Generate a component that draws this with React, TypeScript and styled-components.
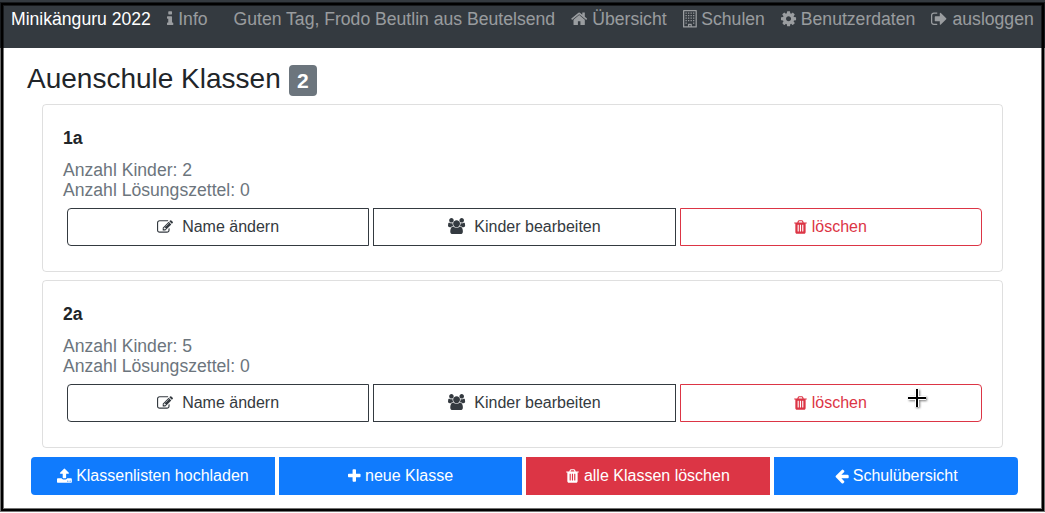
import React from "react";
import styled, { createGlobalStyle, css } from "styled-components";

const GlobalStyle = createGlobalStyle`
  *, *::before, *::after { box-sizing: border-box; }
  body {
    margin: 0;
    background: #fff;
    color: #212529;
    font-family: "Liberation Sans", Arial, sans-serif;
    font-size: 16px;
    line-height: 1.5;
    overflow: hidden;
  }
`;

/* Icon outlines on a 1792-unit em square; x and w give each glyph's advance box. */
const icons = {
  info: { x: 576, w: 640, d: "M1216 1344v128q0 26-19 45t-45 19h-512q-26 0-45-19t-19-45v-128q0-26 19-45t45-19h64v-384h-64q-26 0-45-19t-19-45v-128q0-26 19-45t45-19h384q26 0 45 19t19 45v576h64q26 0 45 19t19 45zm-128-1152v192q0 26-19 45t-45 19h-256q-26 0-45-19t-19-45v-192q0-26 19-45t45-19h256q26 0 45 19t19 45z" },
  home: { x: 64, w: 1664, d: "M1472 992v480q0 26-19 45t-45 19h-384v-384h-256v384h-384q-26 0-45-19t-19-45v-480q0-1 .5-3t.5-3l575-474 575 474q1 2 1 6zm223-69l-62 74q-8 9-21 11h-3q-13 0-21-7l-692-577-692 577q-12 8-24 7-13-2-21-11l-62-74q-8-10-7-23.5t11-21.5l719-599q32-26 76-26t76 26l244 204v-195q0-14 9-23t23-9h192q14 0 23 9t9 23v408l219 182q10 8 11 21.5t-7 23.5z" },
  building: { x: 192, w: 1408, d: "M1536 0q26 0 45 19t19 45v1664q0 26-19 45t-45 19h-1280q-26 0-45-19t-19-45v-1664q0-26 19-45t45-19zM320 128v1536h384v-224q0-13 9.500-22.500t22.500-9.500h320q13 0 22.500 9.500t9.500 22.500v224h384v-1536zM832 1536v128h128v-128z" + [256, 512, 768, 1024, 1280].map((y, row) => (row === 4 ? [448, 1216] : [448, 704, 960, 1216]).map((x) => `M${x} ${y}h128v128h-128z`).join("")).join("") },
  cog: { x: 128, w: 1536, d: "M1152 896q0-106-75-181t-181-75-181 75-75 181 75 181 181 75 181-75 75-181zm512-109v222q0 12-8 23t-20 13l-185 28q-19 54-39 91 35 50 107 138 10 12 10 25t-9 23q-27 37-99 108t-94 71q-12 0-26-9l-138-108q-44 23-91 38-16 136-29 186-7 28-36 28h-222q-14 0-24.5-8.5t-11.5-21.5l-28-184q-49-16-90-37l-141 107q-10 9-25 9-14 0-25-11-126-114-165-168-7-10-7-23 0-12 8-23 15-21 51-66.5t54-70.5q-27-50-41-99l-183-27q-13-2-21-12.5t-8-23.5v-222q0-12 8-23t19-13l186-28q14-46 39-92-40-57-107-138-10-12-10-24 0-10 9-23 26-36 98.5-107.5t94.5-71.5q13 0 26 10l138 107q44-23 91-38 16-136 29-186 7-28 36-28h222q14 0 24.5 8.500t11.5 21.500l28 184q49 16 90 37l142-107q9-9 24-9 13 0 25 10 129 119 165 170 7 8 7 22 0 12-8 23-15 21-51 66.500t-54 70.500q26 50 41 98l183 28q13 2 21 12.500t8 23.500z" },
  signOut: { x: 64, w: 1664, d: "M704 1440q0 4 1 20t.5 26.5-3 23.5-10 19.5-20.5 6.5h-320q-119 0-203.5-84.5t-84.5-203.5v-704q0-119 84.5-203.5t203.5-84.5h320q13 0 22.5 9.5t9.5 22.5q0 4 1 20t.5 26.5-3 23.5-10 19.5-20.5 6.5h-320q-66 0-113 47t-47 113v704q0 66 47 113t113 47h312l11.5 1 11.5 3 8 5.5 7 9 2 13.5zm928-544q0 26-19 45l-544 544q-19 19-45 19t-45-19-19-45v-288h-448q-26 0-45-19t-19-45v-384q0-26 19-45t45-19h448v-288q0-26 19-45t45-19 45 19l544 544q19 19 19 45z" },
  edit: { x: 0, w: 1792, d: "M888 1184l116-116-152-152-116 116v56h96v96h56zm440-720q-16-16-33 1l-350 350q-17 17-1 33t33-1l350-350q17-17 1-33zm80 594v190q0 119-84.5 203.5t-203.5 84.5h-832q-119 0-203.5-84.5t-84.5-203.5v-832q0-119 84.5-203.5t203.5-84.5h832q63 0 117 25 15 7 18 23 3 17-9 29l-49 49q-14 14-32 8-23-6-45-6h-832q-66 0-113 47t-47 113v832q0 66 47 113t113 47h832q66 0 113-47t47-113v-126q0-13 9-22l64-64q15-15 35-7t20 29zm-96-738l288 288-672 672h-288v-288zm444 132l-92 92-288-288 92-92q28-28 68-28t68 28l152 152q28 28 28 68t-28 68z" },
  users: { x: 0, w: 1920, d: "M593 896q-162 5-265 128h-134q-82 0-138-40.5t-56-118.5q0-353 124-353 6 0 43.5 21t97.5 42.5 119 21.5q67 0 133-23-5 37-5 66 0 139 81 256zm1071 637q0 120-73 189.5t-194 69.5h-874q-121 0-194-69.5t-73-189.5q0-53 3.5-103.5t14-109 26.5-108.5 43-97.5 62-81 85.5-53.5 111.5-20q10 0 43 21.5t73 48 107 48 135 21.5 135-21.5 107-48 73-48 43-21.5q61 0 111.5 20t85.5 53.5 62 81 43 97.5 26.5 108.5 14 109 3.5 103.5zm-1024-1277q0 106-75 181t-181 75-181-75-75-181 75-181 181-75 181 75 75 181zm704 384q0 159-112.5 271.5t-271.5 112.5-271.5-112.5-112.5-271.5 112.5-271.5 271.5-112.5 271.5 112.5 112.5 271.5zm576 225q0 78-56 118.5t-138 40.5h-134q-103-123-265-128 81-117 81-256 0-29-5-66 66 23 133 23 59 0 119-21.5t97.5-42.5 43.5-21q124 0 124 353zm-128-609q0 106-75 181t-181 75-181-75-75-181 75-181 181-75 181 75 75 181z" },
  trash: { x: 192, w: 1408, d: "M704 1376v-704q0-14-9-23t-23-9h-64q-14 0-23 9t-9 23v704q0 14 9 23t23 9h64q14 0 23-9t9-23zm256 0v-704q0-14-9-23t-23-9h-64q-14 0-23 9t-9 23v704q0 14 9 23t23 9h64q14 0 23-9t9-23zm256 0v-704q0-14-9-23t-23-9h-64q-14 0-23 9t-9 23v704q0 14 9 23t23 9h64q14 0 23-9t9-23zm-544-992h448l-48-117q-7-9-17-11h-317q-10 2-17 11zm928 32v64q0 14-9 23t-23 9h-96v948q0 83-47 143.5t-113 60.5h-832q-66 0-113-58.5t-47-141.5v-952h-96q-14 0-23-9t-9-23v-64q0-14 9-23t23-9h309l70-167q15-37 54-63t79-26h320q40 0 79 26t54 63l70 167h309q14 0 23 9t9 23z" },
  upload: { x: 64, w: 1664, d: "M1344 1472q0-26-19-45t-45-19-45 19-19 45 19 45 45 19 45-19 19-45zm256 0q0-26-19-45t-45-19-45 19-19 45 19 45 45 19 45-19 19-45zm128-224v320q0 40-28 68t-68 28h-1472q-40 0-68-28t-28-68v-320q0-40 28-68t68-28h427q21 56 70.5 92t110.5 36h256q61 0 110.5-36t70.5-92h427q40 0 68 28t28 68zm-325-648q-17 40-59 40h-256v448q0 26-19 45t-45 19h-256q-26 0-45-19t-19-45v-448h-256q-42 0-59-40-17-39 14-69l448-448q18-19 45-19t45 19l448 448q31 30 14 69z" },
  plus: { x: 192, w: 1408, d: "M1600 736v192q0 40-28 68t-68 28h-416v416q0 40-28 68t-68 28h-192q-40 0-68-28t-28-68v-416h-416q-40 0-68-28t-28-68v-192q0-40 28-68t68-28h416v-416q0-40 28-68t68-28h192q40 0 68 28t28 68v416h416q40 0 68 28t28 68z" },
  arrowLeft: { x: 128, w: 1536, d: "M1664 896v128q0 53-32.5 90.5t-84.5 37.5h-704l293 294q38 36 38 90t-38 90l-75 76q-37 37-90 37-52 0-91-37l-651-652q-37-37-37-90 0-52 37-91l651-650q38-38 91-38 52 0 90 38l75 74q38 38 38 91t-38 91l-293 293h704q52 0 84.5 37.5t32.5 90.5z" },
};

const Glyph = styled.svg<{ $w: number; $tight: boolean }>`
  display: inline-block;
  height: 1em;
  width: ${(p) => p.$w / 1792}em;
  vertical-align: ${(p) => (p.$tight ? "-0.13em" : "-0.17em")};
  fill: currentColor;
  overflow: visible;
`;

function Icon({ name }: { name: keyof typeof icons }) {
  const { x, w, d } = icons[name];
  return (
    <Glyph $w={w} $tight={name === "users"} viewBox={`${x} 0 ${w} 1792`} aria-hidden="true">
      <path
        d={d}
        fillRule={name === "building" ? "evenodd" : "nonzero"}
        transform={name === "trash" ? "translate(-90 0)" : undefined}
      />
    </Glyph>
  );
}

const Page = styled.div`
  position: relative;
  height: 513px;
`;

const Frame = styled.div`
  position: absolute;
  inset: 3px 1px 2px 1px;
  border: 2px solid #000;
  box-shadow: 0 0 0 1px rgba(0, 0, 0, 0.55), inset 0 0 0 1px rgba(0, 0, 0, 0.55);
  pointer-events: none;
`;

const Navbar = styled.nav`
  display: flex;
  align-items: flex-start;
  height: 48px;
  padding: 6px 11px 0;
  background: #343a40;
  color: rgba(255, 255, 255, 0.5);
  font-size: 17.6px;
  line-height: 27px;
  white-space: nowrap;
`;

const Brand = styled.span`
  color: #fff;
  margin-right: 16.2px;
`;

const NavItem = styled.a<{ $gap?: number }>`
  color: inherit;
  margin-right: ${(p) => p.$gap ?? 16}px;
`;

const Main = styled.main`
  padding: 14px 27px 0;
`;

const Title = styled.h1`
  display: flex;
  align-items: center;
  gap: 8px;
  height: 34px;
  margin: 0 0 8px;
  font-size: 28px;
  font-weight: 400;
  line-height: 34px;
`;

const Badge = styled.span`
  margin-top: 2px;
  padding: 5px 8.3px;
  border-radius: 4px;
  background: #6c757d;
  color: #fff;
  font-size: 21px;
  font-weight: 700;
  line-height: 21px;
`;

const CardList = styled.div`
  display: grid;
  gap: 8px;
  padding: 0 15px;
`;

const Card = styled.section`
  height: 168px;
  padding: 20px;
  border: 1px solid rgba(0, 0, 0, 0.125);
  border-radius: 4px;
`;

const CardTitle = styled.h2`
  margin: 3px 0 12px;
  font-size: 17.6px;
  line-height: 20px;
`;

const CardText = styled.p`
  margin: 0 0 8px;
  color: #6c757d;
  font-size: 17.6px;
  line-height: 20px;
`;

const ButtonGroup = styled.div`
  display: flex;
  gap: 4px;
  padding: 0 0 0 4px;
`;

const Actions = styled(ButtonGroup)`
  margin-top: 9px;
  padding-left: 3.9px;
`;

const filled = { primary: "#107bfd", danger: "#dc3545" };
const outlined = { dark: "#343a40", danger: "#dc3545" };

const baseButton = css`
  flex: 1 1 0;
  height: 38px;
  padding: 0;
  font: inherit;
  line-height: 24px;
  white-space: pre;
  border-radius: 0;
  &:first-child { border-radius: 4px 0 0 4px; }
  &:last-child { border-radius: 0 4px 4px 0; }
`;

const OutlineButton = styled.button<{ $tone: keyof typeof outlined }>`
  ${baseButton}
  background: transparent;
  color: ${(p) => outlined[p.$tone]};
  border: 1px solid ${(p) => outlined[p.$tone]};
`;

const SolidButton = styled.button<{ $tone: keyof typeof filled }>`
  ${baseButton}
  background: ${(p) => filled[p.$tone]};
  color: #fff;
  border: 0;
`;

const Crosshair = styled.svg`
  position: absolute;
  left: 906px;
  top: 387px;
  width: 24px;
  height: 24px;
  filter: drop-shadow(1px 1px 1px rgba(0, 0, 0, 0.5));
`;

const classes = [
  { name: "1a", children: 2, sheets: 0 },
  { name: "2a", children: 5, sheets: 0 },
];

export default function App() {
  return (
    <Page>
      <GlobalStyle />
      <Navbar>
        <Brand>Minikänguru 2022</Brand>
        <NavItem $gap={26}><Icon name="info" /> Info</NavItem>
        <NavItem>Guten Tag, Frodo Beutlin aus Beutelsend</NavItem>
        <NavItem><Icon name="home" /> Übersicht</NavItem>
        <NavItem><Icon name="building" /> Schulen</NavItem>
        <NavItem><Icon name="cog" /> Benutzerdaten</NavItem>
        <NavItem $gap={0}><Icon name="signOut" /> ausloggen</NavItem>
      </Navbar>
      <Main>
        <Title>Auenschule Klassen <Badge>{classes.length}</Badge></Title>
        <CardList>
          {classes.map((c) => (
            <Card key={c.name}>
              <CardTitle>{c.name}</CardTitle>
              <CardText>
                Anzahl Kinder: {c.children}
                <br />
                Anzahl Lösungszettel: {c.sheets}
              </CardText>
              <ButtonGroup>
                <OutlineButton $tone="dark"><Icon name="edit" />{"  "}Name ändern</OutlineButton>
                <OutlineButton $tone="dark"><Icon name="users" />{"  "}Kinder bearbeiten</OutlineButton>
                <OutlineButton $tone="danger"><Icon name="trash" /> löschen</OutlineButton>
              </ButtonGroup>
            </Card>
          ))}
        </CardList>
        <Actions>
          <SolidButton $tone="primary"><Icon name="upload" /> Klassenlisten hochladen</SolidButton>
          <SolidButton $tone="primary"><Icon name="plus" /> neue Klasse</SolidButton>
          <SolidButton $tone="danger"><Icon name="trash" /> alle Klassen löschen</SolidButton>
          <SolidButton $tone="primary"><Icon name="arrowLeft" /> Schulübersicht</SolidButton>
        </Actions>
      </Main>
      <Crosshair viewBox="0 0 24 24">
        <path d="M11 2v18M2 11h18" stroke="#fff" strokeWidth="4" />
        <path d="M11 2v18M2 11h18" stroke="#000" strokeWidth="2" />
      </Crosshair>
      <Frame />
    </Page>
  );
}
